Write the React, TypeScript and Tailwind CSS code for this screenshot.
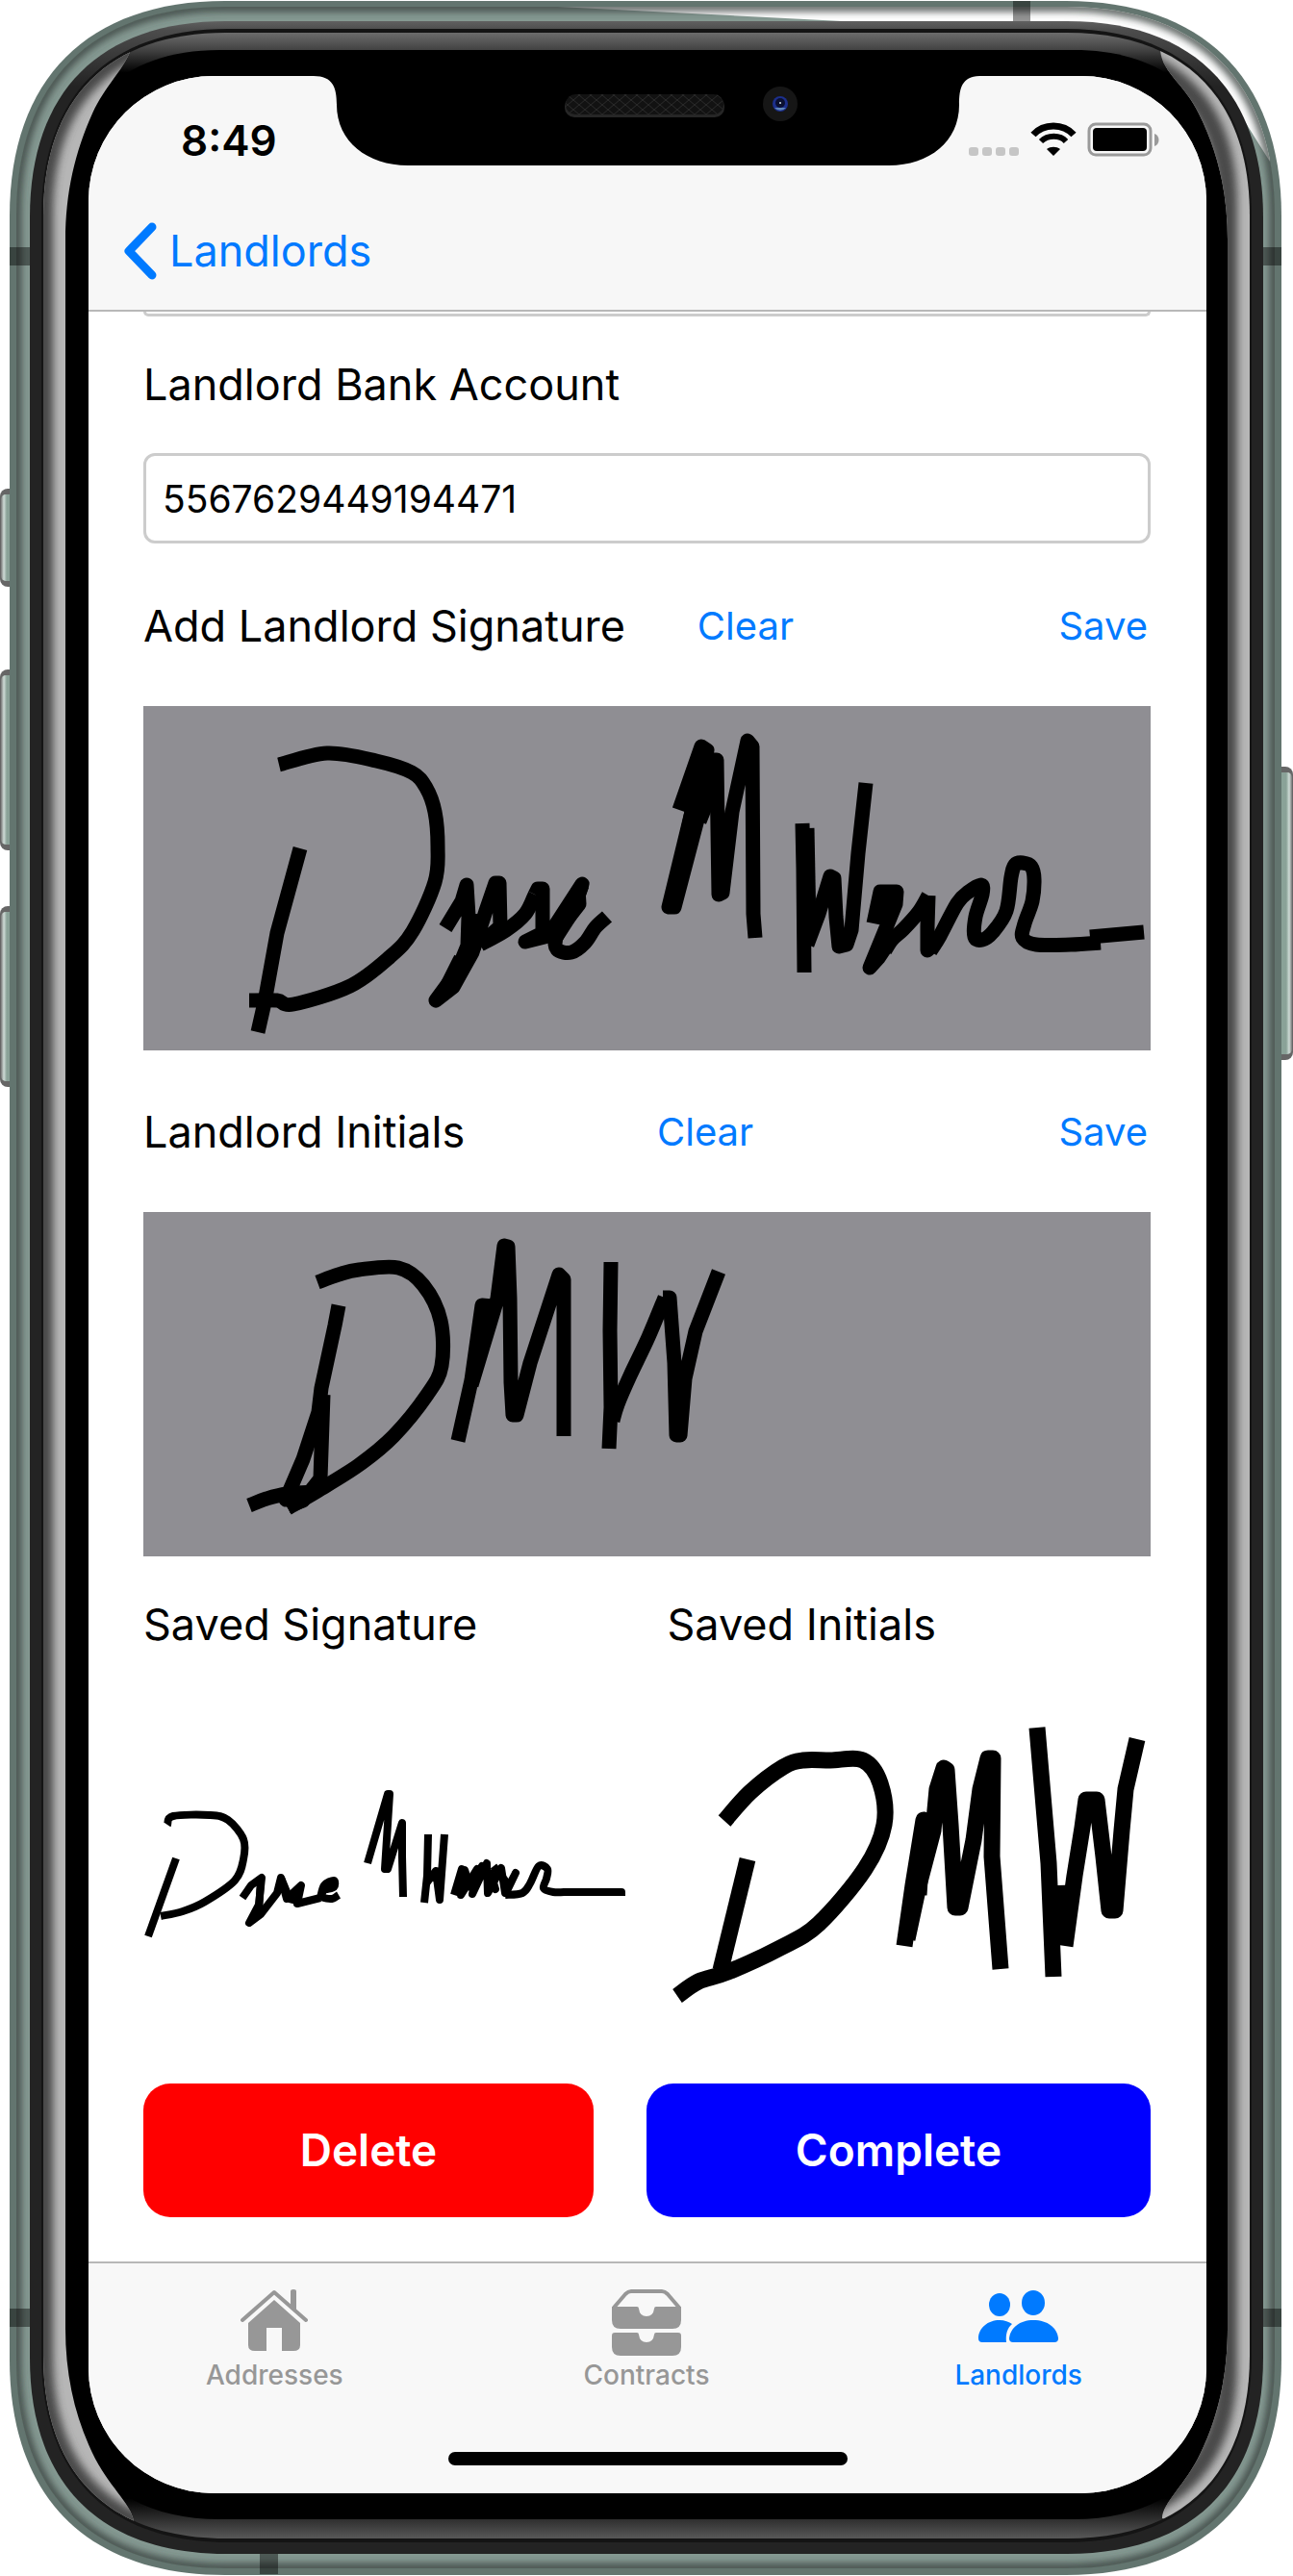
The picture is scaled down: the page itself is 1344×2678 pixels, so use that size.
import React, { useState } from "react";

/** Closed outline of a box with continuous ("squircle") corners. */
function outline(x0: number, y0: number, x1: number, y1: number, r: number) {
  const h = Math.round(r * 0.36);
  return [
    `M${x0 + r} ${y0}H${x1 - r}`,
    `C${x1 - h} ${y0} ${x1} ${y0 + h} ${x1} ${y0 + r}`,
    `V${y1 - r}`,
    `C${x1} ${y1 - h} ${x1 - h} ${y1} ${x1 - r} ${y1}`,
    `H${x0 + r}`,
    `C${x0 + h} ${y1} ${x0} ${y1 - h} ${x0} ${y1 - r}`,
    `V${y0 + r}`,
    `C${x0} ${y0 + h} ${x0 + h} ${y0} ${x0 + r} ${y0}Z`,
  ].join("");
}

const rim = outline(10, 1, 1332, 2677, 224);
const band = outline(17, 7, 1325, 2670, 217);
const inner = outline(31, 22, 1313, 2655, 204);
const seam = outline(43, 30, 1301, 2643, 194);
const glass = outline(45, 34, 1299, 2639, 190);
const bezel = outline(68, 52, 1276, 2619, 160);

function SideButton({ x, y, height, fill }: { x: number; y: number; height: number; fill: string }) {
  return (
    <g>
      <rect x={x} y={y} width="22" height={height} rx="8" fill="#666666" />
      <rect x={x + 1} y={y + 6} width="20" height={height - 12} rx="5" fill={fill} />
    </g>
  );
}

function PhoneFrame() {
  return (
    <svg className="absolute inset-0 h-full w-full" viewBox="0 0 1344 2678" preserveAspectRatio="none" aria-hidden="true">
      <defs>
        <linearGradient id="leftKey" x1="0" x2="1">
          <stop offset="0" stopColor="#777777" />
          <stop offset="0.15" stopColor="#cfdcd7" />
          <stop offset="0.3" stopColor="#8aa298" />
          <stop offset="1" stopColor="#8aa298" />
        </linearGradient>
        <linearGradient id="rightKey" x1="1" x2="0">
          <stop offset="0" stopColor="#777777" />
          <stop offset="0.15" stopColor="#cfdcd7" />
          <stop offset="0.3" stopColor="#8aa298" />
          <stop offset="1" stopColor="#8aa298" />
        </linearGradient>
        <linearGradient id="innerFill" gradientUnits="userSpaceOnUse" x1="0" x2="0" y1="22" y2="90">
          <stop offset="0" stopColor="#606060" />
          <stop offset="0.14" stopColor="#4c4c4c" />
          <stop offset="1" stopColor="#232323" />
        </linearGradient>
        <linearGradient id="glassFill" gradientUnits="userSpaceOnUse" x1="0" x2="0" y1="34" y2="2639">
          <stop offset="0" stopColor="#6c6c6c" />
          <stop offset="0.0069" stopColor="#424242" />
          <stop offset="0.016" stopColor="#000000" />
          <stop offset="0.984" stopColor="#000000" />
          <stop offset="0.9923" stopColor="#2e2e2e" />
          <stop offset="1" stopColor="#585858" />
        </linearGradient>
        <filter id="soft" filterUnits="userSpaceOnUse" x="0" y="0" width="1344" height="2678">
          <feGaussianBlur stdDeviation="4" />
        </filter>
        <clipPath id="bandClip"><path d={band} /></clipPath>
        <clipPath id="glassClip"><path d={glass} /></clipPath>
        <clipPath id="leftShine">
          <path d="M136 52C126 76 110 88 96 118C78 158 68 200 68 250V2420C68 2470 78 2512 96 2550C112 2584 136 2602 139 2621L20 2660V20Z" />
        </clipPath>
        <clipPath id="rightShine">
          <path d="M1206 52C1208 76 1232 88 1246 118C1266 158 1276 200 1276 250V2420C1276 2470 1266 2512 1248 2550C1232 2584 1208 2602 1208 2618L1330 2660V20Z" />
        </clipPath>
      </defs>

      <SideButton x={0} y={508} height={102} fill="url(#leftKey)" />
      <SideButton x={0} y={696} height={188} fill="url(#leftKey)" />
      <SideButton x={0} y={942} height={188} fill="url(#leftKey)" />
      <SideButton x={1322} y={797} height={305} fill="url(#rightKey)" />

      <path d={rim} fill="#63756f" />
      <g clipPath="url(#bandClip)">
        <path d={band} fill="#859992" />
        <path d="M560 6L895 23H1100L1290 120L1320 168V0H560Z" fill="#ffffff" />
        <path d={band} fill="none" stroke="#353d3a" strokeWidth="8" filter="url(#soft)" />
      </g>
      <g fill="#000000" fillOpacity="0.42">
        <rect x="10" y="257" width="22" height="19" />
        <rect x="1311" y="257" width="21" height="19" />
        <rect x="10" y="2400" width="22" height="19" />
        <rect x="1311" y="2400" width="21" height="19" />
        <rect x="1053" y="1" width="18" height="22" />
        <rect x="270" y="2654" width="19" height="22" />
      </g>
      <path d={inner} fill="url(#innerFill)" />
      <path d={seam} fill="#141414" />
      <path d={glass} fill="url(#glassFill)" />
      <path d={bezel} fill="#000000" />
      <g clipPath="url(#glassClip)">
        <g clipPath="url(#leftShine)">
          <rect x="0" y="0" width="200" height="2678" fill="#b6b6b6" />
          <path d={glass} fill="none" stroke="#4a4a4a" strokeWidth="20" filter="url(#soft)" />
        </g>
        <g clipPath="url(#rightShine)">
          <rect x="1150" y="0" width="194" height="2678" fill="#b6b6b6" />
          <path d={bezel} fill="none" stroke="#4a4a4a" strokeWidth="20" filter="url(#soft)" />
        </g>
      </g>
    </svg>
  );
}

function Notch() {
  return (
    <svg className="absolute left-1/2 top-0 -ml-[347px] h-[93px] w-[694px]" viewBox="0 0 694 93" aria-hidden="true">
      <defs>
        <pattern id="mesh" width="12" height="10" patternUnits="userSpaceOnUse">
          <path d="M0 0L12 10M12 0L0 10" stroke="#2a2a2a" strokeWidth="1" />
        </pattern>
      </defs>
      <path d="M0 0C20 0 24 12 24 30C24 68 56 93 98 93H598C640 93 671 68 671 30C671 12 674 0 694 0Z" fill="#000000" />
      <rect x="261" y="21" width="166" height="22" rx="10" fill="#262626" />
      <rect x="262" y="19" width="164" height="21" rx="10" fill="#121212" />
      <rect x="262" y="19" width="164" height="21" rx="10" fill="url(#mesh)" />
      <circle cx="485" cy="29" r="18" fill="#161616" />
      <circle cx="485" cy="29" r="8" fill="#1c2f8c" />
      <path d="M479 33A8 8 0 0 0 491 33Z" fill="#5f86b8" />
      <circle cx="485" cy="28" r="5" fill="#0b1030" />
      <circle cx="485" cy="28" r="1" fill="#d0e0e8" />
    </svg>
  );
}

type Point = [number, number];

/** Smooth pen stroke that passes through every sampled point. */
function curve(points: Point[]) {
  let d = `M${points[0][0]} ${points[0][1]}`;
  for (let i = 0; i < points.length - 1; i++) {
    const a = points[Math.max(i - 1, 0)];
    const b = points[i];
    const c = points[i + 1];
    const e = points[Math.min(i + 2, points.length - 1)];
    d += `C${b[0] + (c[0] - a[0]) / 6} ${b[1] + (c[1] - a[1]) / 6} ${c[0] - (e[0] - b[0]) / 6} ${c[1] - (e[1] - b[1]) / 6} ${c[0]} ${c[1]}`;
  }
  return d;
}

function Ink({ strokes, width, viewBox, label, className }: { strokes: string[]; width: number; viewBox: string; label: string; className: string }) {
  return (
    <svg className={className} viewBox={viewBox} role="img" aria-label={label} preserveAspectRatio="xMinYMin meet">
      <g fill="none" stroke="#000000" strokeWidth={width} strokeLinejoin="round">
        {strokes.map((d) => (
          <path key={d} d={d} />
        ))}
      </g>
    </svg>
  );
}

const signatureInk = [
  curve([[141, 61], [191, 49], [242, 57], [279, 69], [294, 85], [303, 110], [306, 146], [303, 183], [280, 234], [256, 261], [215, 291], [156, 310], [139, 306], [110, 306]]),
  "M163 148L139 236L126 308L119 339",
  "M314 231L331 203L336 186L338 219L337 249L326 276L304 306L322 292L342 256L356 213L366 184L370 184L371 229L350 248",
  curve([[350, 248], [377, 233], [397, 216], [407, 196]]),
  "M407 196L410 190L415 190L415 236L397 245L421 239L456 185L446 214L430 239",
  curve([[456, 186], [446, 212], [430, 238], [430, 253], [445, 256], [459, 246], [470, 230], [482, 219]]),
  "M344 216L344 250L318 290",
  "M330 262L310 302",
  "M452 190L453 206L428 238",
  "M557 108L580 42L586 46L570 110L546 209L552 209L578 110L592 56L596 56L597 130L598 196L602 194L612 110L628 36L633 42L634 216L636 241",
  "M574 70L570 110L551 200",
  "M592 60L586 100L578 120",
  "M685 122L686 169L687 277",
  "M690 127L692 230",
  "M690 248L702 216L714 177L718 179L720 219L723 250L731 248L736 233L743 153L751 80",
  "M759 226L766 193L783 193L782 206L771 233L755 272L764 262L772 250",
  curve([[771, 254], [778, 243], [790, 232], [806, 214], [816, 197]]),
  "M816 197L815 229L815 254L824 246",
  curve([[818, 255], [828, 239], [846, 205], [858, 193], [871, 186], [872, 196], [865, 219], [864, 240], [872, 243], [883, 235], [897, 213], [902, 178], [906, 165], [914, 163], [923, 167], [926, 180], [924, 203], [916, 226], [914, 241], [928, 248], [964, 248], [995, 246]]),
  "M770 196L768 220L776 206",
  "M984 240L1040 235",
];

const initialsInk = [
  curve([[181, 73], [203, 65], [224, 60], [265, 58], [291, 76], [309, 113], [310, 160], [295, 190], [260, 233], [224, 263], [181, 290], [150, 308]]),
  curve([[110, 305], [128, 298], [149, 293], [180, 291]]),
  "M203 97L199 118L185 183L182 208L166 257L148 299L164 298",
  "M187 190L184 277L166 300L150 306",
  "M327 238L341 175L352 97L362 98L345 163",
  "M341 180L356 130L368 90L375 35L379 36L381 90L382 177L384 211L388 211L402 157L432 65L437 70L437 233",
  "M378 40L376 90",
  "M486 52L485 123L486 203L484 246",
  curve([[488, 217], [493, 200], [506, 170], [525, 130], [542, 89]]),
  "M540 89H547L552 157L554 232H558L563 173L574 124L598 62",
];

const savedSignatureInk = [
  curve([[25, 57], [31, 48], [69, 47], [88, 52], [104, 72], [104, 93], [95, 115], [64, 137], [41, 147], [18, 152]]),
  "M34 92L5 173",
  "M103 133L112 120L123 112L120 140L110 159L122 150L139 128L143 112L149 134L164 120L160 139L184 133",
  curve([[184, 133], [188, 120], [198, 115], [198, 122], [188, 125], [186, 132], [196, 134], [203, 130]]),
  "M122 114L120 148",
  "M143 112L152 134L160 136",
  "M233 97L254 25H256L251 103H254L269 55V90L270 132",
  "M296 67L295 110L292 138",
  "M313 67L308 135L304 105L294 118",
  "M296 112H308",
  "M323 130L331 103L330 130L347 103L342 129L357 97L358 128L372 102L376 128L387 107L376 130",
  curve([[376, 130], [394, 128], [402, 118], [411, 100], [420, 103], [419, 113], [416, 123], [426, 127], [440, 127]]),
  "M436 127H497V131",
  "M326 126L334 104L340 122L352 100L366 124L360 104",
  "M364 100L380 120",
];

const savedInitialsInk = [
  curve([[60, 123], [87, 93], [121, 67], [142, 60], [170, 60], [204, 60], [222, 84], [226, 127], [206, 173], [158, 230], [118, 255], [64, 280], [33, 290], [11, 305]]),
  "M84 163L56 278",
  "M247 253L256 190L267 122L262 200",
  "M250 246L262 190L277 133L281 90L288 68L291 70L295 127L300 213H305L319 143L326 90L334 58H339L338 160L347 277",
  "M385 26L397 167L402 285",
  "M414 253L424 180L432 130L436 101H447L454 160L460 216H466L473 133L477 90L489 38",
  "M406 190L408 252",
];

function StatusIcons() {
  return (
    <svg className="h-[40px] w-[200px]" viewBox="0 0 200 40" aria-hidden="true">
      <g fill="#c6c6c6">
        <rect x="0" y="27" width="10" height="9" rx="3" />
        <rect x="14" y="27" width="10" height="9" rx="3" />
        <rect x="28" y="27" width="10" height="9" rx="3" />
        <rect x="42" y="27" width="10" height="9" rx="3" />
      </g>
      <path d="M67 14C78 2 98 2 109 14" fill="none" stroke="#000000" strokeWidth="7" />
      <path d="M75 21C82 14 95 14 101 21" fill="none" stroke="#000000" strokeWidth="6" />
      <path d="M88 36L81 29C85 26 91 26 95 29Z" fill="#000000" />
      <rect x="125" y="3" width="64" height="32" rx="7" fill="none" stroke="#9a9a9a" strokeWidth="3" />
      <rect x="129" y="7" width="56" height="24" rx="4" fill="#000000" />
      <path d="M193 13C199 15 199 24 193 26Z" fill="#9a9a9a" />
    </svg>
  );
}

function HouseIcon() {
  return (
    <svg className="h-[70px] w-[70px]" viewBox="0 0 70 70" aria-hidden="true">
      <path d="M2 32L35 3L68 32" fill="none" stroke="currentColor" strokeWidth="4" strokeLinecap="round" strokeLinejoin="round" />
      <path d="M52 2Q52 0 55 0Q58 0 58 2V24L52 18Z" fill="currentColor" />
      <path d="M35 11L62 35V58Q62 64 55 64H43V40H27V64H15Q8 64 8 58V35Z" fill="currentColor" />
    </svg>
  );
}

function TrayIcon() {
  return (
    <svg className="h-[70px] w-[72px]" viewBox="0 0 72 70" aria-hidden="true">
      <path d="M2 19L14 5Q17 2 20 2H52Q55 2 58 5L70 19" fill="none" stroke="currentColor" strokeWidth="4" />
      <path d="M0 18H26Q28 18 28 20Q29 28 36 28Q43 28 44 20Q44 18 46 18H72V32Q72 41 63 41H9Q0 41 0 32Z" fill="currentColor" />
      <path d="M3 45H26Q28 45 28 47Q29 55 36 55Q43 55 44 47Q44 45 46 45H69Q72 45 72 48V60Q72 69 63 69H9Q0 69 0 60V48Q0 45 3 45Z" fill="currentColor" />
    </svg>
  );
}

function PeopleIcon() {
  return (
    <svg className="h-[70px] w-[84px]" viewBox="0 0 84 70" aria-hidden="true">
      <ellipse cx="22" cy="16" rx="11" ry="12" fill="currentColor" />
      <ellipse cx="57" cy="14" rx="12" ry="13" fill="currentColor" />
      <path d="M0 51C0 40 10 32 22 32C27 32 32 34 35 36C30 40 28 47 29 55H4Q0 55 0 51Z" fill="currentColor" />
      <path d="M32 51C33 40 43 32 57 32C72 32 82 40 83 51Q83 55 79 55H36Q32 55 32 51Z" fill="currentColor" />
    </svg>
  );
}

const tabs = [
  { name: "Addresses", Icon: HouseIcon },
  { name: "Contracts", Icon: TrayIcon },
  { name: "Landlords", Icon: PeopleIcon },
];

function PadHeader({ title, titleClass, onClear }: { title: string; titleClass: string; onClear: () => void }) {
  return (
    <div className="flex h-[60px] items-center">
      <h2 className={titleClass}>{title}</h2>
      <button type="button" onClick={onClear} className="text-[40px] text-[#007aff]">Clear</button>
      <button type="button" className="ml-auto mr-[3px] text-[40px] text-[#007aff]">Save</button>
    </div>
  );
}

export default function App() {
  const [account, setAccount] = useState("5567629449194471");
  const [signed, setSigned] = useState(true);
  const [initialed, setInitialed] = useState(true);
  const [active, setActive] = useState("Landlords");

  return (
    <div className="relative bg-white pt-[79px] pr-[90px] pb-[86px] pl-[92px] font-['Inter','Liberation_Sans',sans-serif] text-black">
      <PhoneFrame />
      <div className="relative flex flex-col overflow-hidden rounded-[130px] bg-white">
        <header className="border-b-2 border-[#b8b8b8] bg-[#f7f7f7]">
          <div className="flex h-[134px] items-center justify-between pr-[47px] pl-[96px]">
            <time className="text-[44px] font-semibold">8:49</time>
            <StatusIcons />
          </div>
          <nav className="flex h-[109px] items-start pl-[35px]">
            <a href="#landlords" className="flex h-[96px] items-center gap-[13px] text-[45px] text-[#007aff]">
              <svg className="h-[60px] w-[36px]" viewBox="0 0 36 60" aria-hidden="true">
                <path d="M31 5L7 30L31 55" fill="none" stroke="currentColor" strokeWidth="9" strokeLinecap="round" strokeLinejoin="round" />
              </svg>
              Landlords
            </a>
          </nav>
        </header>
        <Notch />

        <main className="flex flex-col pr-[58px] pb-[46px] pl-[57px]">
          <div className="h-[5px] rounded-b-xl border-x-3 border-b-3 border-[#cccccc]" />
          <label htmlFor="account" className="mt-[41px] h-[60px] text-[45px] leading-[60px]">Landlord Bank Account</label>
          <input
            id="account"
            value={account}
            onChange={(e) => setAccount(e.target.value)}
            className="mt-[41px] h-[94px] w-full rounded-xl border-3 border-[#cccccc] bg-white px-[17px] text-[39px]"
          />

          <section className="mt-[56px] flex flex-col gap-[53px]">
            <PadHeader title="Add Landlord Signature" titleClass="w-[55%] text-[45px]" onClear={() => setSigned(false)} />
            <div className="h-[358px] bg-[#8f8e93]">
              {signed && <Ink className="h-full w-full" viewBox="0 0 1047 358" width={15} strokes={signatureInk} label="Landlord signature" />}
            </div>
          </section>

          <section className="mt-[55px] flex flex-col gap-[53px]">
            <PadHeader title="Landlord Initials" titleClass="w-[51%] text-[45px]" onClear={() => setInitialed(false)} />
            <div className="h-[358px] bg-[#8f8e93]">
              {initialed && <Ink className="h-full w-full" viewBox="0 0 1047 358" width={15} strokes={initialsInk} label="Landlord initials" />}
            </div>
          </section>

          <div className="mt-[41px] grid grid-cols-[52%_48%]">
            <section>
              <h2 className="h-[60px] text-[45px] leading-[60px]">Saved Signature</h2>
              <Ink className="mt-[51px] h-[320px] w-[502px]" viewBox="0 -70 502 320" width={8} strokes={savedSignatureInk} label="Saved signature" />
            </section>
            <section>
              <h2 className="h-[60px] text-[45px] leading-[60px]">Saved Initials</h2>
              <Ink className="mt-[51px] h-[320px] w-full" viewBox="0 0 502 320" width={17} strokes={savedInitialsInk} label="Saved initials" />
            </section>
          </div>

          <div className="mt-[76px] flex gap-[55px]">
            <button type="button" className="h-[139px] w-[468px] rounded-[28px] bg-[#ff0000] text-[46px] font-semibold text-white">Delete</button>
            <button type="button" className="h-[139px] flex-1 rounded-[28px] bg-[#0000ff] text-[46px] font-semibold text-white">Complete</button>
          </div>
        </main>

        <footer className="border-t-2 border-[#b8b8b8] bg-[#f8f8f8]">
          <nav className="grid grid-cols-3 pt-[27px] pr-[2px]">
            {tabs.map(({ name, Icon }) => (
              <button
                key={name}
                type="button"
                onClick={() => setActive(name)}
                className={
                  name === active
                    ? "flex flex-col items-center text-[28px] leading-[38px] font-medium text-[#007aff]"
                    : "flex flex-col items-center text-[28px] leading-[38px] font-medium text-[#979797]"
                }
              >
                <Icon />
                {name}
              </button>
            ))}
          </nav>
          <div className="mx-auto mt-[61px] mb-[29px] h-[14px] w-[415px] rounded-full bg-black" />
        </footer>
      </div>
    </div>
  );
}
